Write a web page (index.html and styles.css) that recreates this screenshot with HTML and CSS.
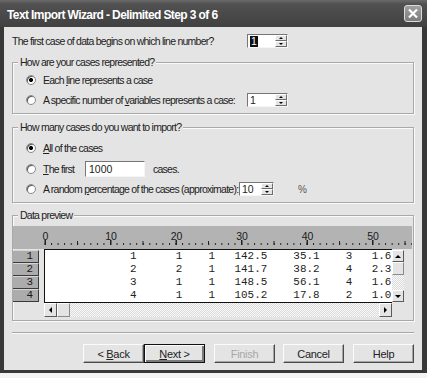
FILE: index.html
```html
<!DOCTYPE html>
<html>
<head>
<meta charset="utf-8">
<link rel="stylesheet" href="styles.css">
</head>
<body>
<div class="window">
  <div class="titlebar">
    <span class="title">Text Import Wizard - Delimited Step 3 of 6</span>
    <span class="close"><svg width="12" height="11" viewBox="0 0 12 11"><path d="M2 1.5 L10 9.5 M10 1.5 L2 9.5" stroke="#fff" stroke-width="2.2" fill="none"/></svg></span>
  </div>
  <div class="client">
    <div class="lineq">
      <span class="lbl">The first case of data begins on which line number?</span>
      <span class="spin w41"><span class="val"><span class="hl">1</span></span><span class="arrows"><span><i class="up"></i></span><span><i class="dn"></i></span></span></span>
    </div>

    <fieldset class="group g1">
      <legend>How are your cases represented?</legend>
      <div class="opt"><span class="radio on"></span><span>Each <u>l</u>ine represents a case</span></div>
      <div class="opt gap6"><span class="radio"></span><span class="lw204">A specific number of <u>v</u>ariables represents a case:</span><span class="spin w41"><span class="val">1</span><span class="arrows"><span><i class="up"></i></span><span><i class="dn"></i></span></span></span></div>
    </fieldset>

    <fieldset class="group g2">
      <legend>How many cases do you want to import?</legend>
      <div class="opt"><span class="radio on"></span><span><u>A</u>ll of the cases</span></div>
      <div class="opt tall gap6"><span class="radio"></span><span class="lw42"><u>T</u>he first</span><span class="field">1000</span><span class="after">cases.</span></div>
      <div class="opt gap5"><span class="radio"></span><span class="lw196">A random <u>p</u>ercentage of the cases (approximate):</span><span class="spin w35"><span class="val">10</span><span class="arrows"><span><i class="up"></i></span><span><i class="dn"></i></span></span></span><span class="pct">%</span></div>
    </fieldset>

    <fieldset class="group g3">
      <legend>Data preview</legend>
      <div class="preview">
        <div class="ruler">
          <svg width="399" height="23" viewBox="0 0 399 23">
            <defs>
              <pattern id="tk" x="31.5" y="0" width="6.55" height="23" patternUnits="userSpaceOnUse">
                <rect x="0" y="17" width="1" height="2" fill="#222"/>
              </pattern>
            </defs>
            <rect x="31.5" y="0" width="367.5" height="23" fill="url(#tk)"/>
            <g fill="#222">
              <rect x="64" y="15" width="1" height="4"/>
              <rect x="129.5" y="15" width="1" height="4"/>
              <rect x="195" y="15" width="1" height="4"/>
              <rect x="260.5" y="15" width="1" height="4"/>
              <rect x="326" y="15" width="1" height="4"/>
              <rect x="391.5" y="15" width="1" height="4"/>
              <rect x="31.5" y="14" width="1.5" height="5"/>
              <rect x="97" y="14" width="1.5" height="5"/>
              <rect x="162.5" y="14" width="1.5" height="5"/>
              <rect x="228" y="14" width="1.5" height="5"/>
              <rect x="293.5" y="14" width="1.5" height="5"/>
              <rect x="359" y="14" width="1.5" height="5"/>
            </g>
            <g class="rnum" text-anchor="middle">
              <text x="32.5" y="13.5">0</text>
              <text x="98" y="13.5">10</text>
              <text x="163.5" y="13.5">20</text>
              <text x="229" y="13.5">30</text>
              <text x="294.5" y="13.5">40</text>
              <text x="360" y="13.5">50</text>
            </g>
          </svg>
        </div>
        <div class="rowheads">
          <span>1</span><span>2</span><span>3</span><span>4</span>
        </div>
        <pre class="data">             1      1    1   142.5    35.1    3   1.6
             2      2    1   141.7    38.2    4   2.3
             3      1    1   148.5    56.1    4   1.6
             4      1    1   105.2    17.8    2   1.0</pre>
        <div class="vscroll">
          <span class="sbtn"><i class="up"></i></span>
          <span class="thumb"></span>
          <span class="track"></span>
          <span class="sbtn"><i class="dn"></i></span>
        </div>
        <div class="hscroll">
          <span class="sbtn"><i class="lt"></i></span>
          <span class="thumb"></span>
          <span class="track"></span>
          <span class="sbtn"><i class="rt"></i></span>
        </div>
      </div>
    </fieldset>

    <div class="sep"></div>

    <div class="buttons">
      <span class="btn back">&lt; <u>B</u>ack</span>
      <span class="btn next"><u>N</u>ext &gt;</span>
      <span class="btn finish">Finish</span>
      <span class="btn cancel">Cancel</span>
      <span class="btn help">Help</span>
    </div>
  </div>
</div>
</body>
</html>
```

FILE: styles.css
```css
* { box-sizing: border-box; }
html, body { margin: 0; padding: 0; }
body {
  width: 427px;
  height: 378px;
  overflow: hidden;
  background: #f3f3f3;
  font-family: "Liberation Sans", Arial, sans-serif;
  font-size: 10.5px;
  letter-spacing: -0.75px;
  white-space: nowrap;
  color: #222;
}
u { text-decoration: underline; text-underline-offset: 1px; }

.window {
  width: 427px;
  height: 373px;
  display: flex;
  flex-direction: column;
  background: #383838;
}
.titlebar {
  height: 27px;
  flex: none;
  display: flex;
  align-items: center;
  justify-content: space-between;
  padding: 2px 5px 0 7px;
  background: linear-gradient(#6a6a6a, #515151 4px, #4a4a4a 50%, #404040);
}
.title {
  color: #fff;
  font-family: "Liberation Sans", Arial, sans-serif;
  font-weight: bold;
  font-size: 12px;
  letter-spacing: -0.6px;
}
.close {
  width: 18px;
  height: 17px;
  margin-top: -2px;
  border: 1px solid #dcdcdc;
  border-radius: 3px;
  background: linear-gradient(#a0a0a0, #7c7c7c);
  display: flex;
  align-items: center;
  justify-content: center;
}
.client {
  flex: 1;
  margin: 0 5px 3px 4px;
  background: #e4e4e4;
  padding: 7px 8px 0 8px;
  display: flex;
  flex-direction: column;
}

.lineq { display: flex; align-items: center; height: 14px; }
.lineq .lbl { width: 235px; }

/* spinner */
.spin {
  display: flex;
  flex: none;
  height: 14px;
  background: #fff;
  border: 1px solid;
  border-color: #767676 #f6f6f6 #f6f6f6 #767676;
  letter-spacing: 0;
}
.w41 { width: 41px; }
.w35 { width: 35px; }
.spin .val { flex: 1; padding-left: 2px; line-height: 12px; }
.hl { background: #111; color: #fff; padding: 0 1px; display: inline-block; line-height: 11px; }
.spin .arrows { width: 12px; display: flex; flex-direction: column; }
.spin .arrows > span {
  flex: 1;
  background: #e4e4e4;
  border: 1px solid;
  border-color: #fff #6c6c6c #6c6c6c #fff;
  display: flex;
  align-items: center;
  justify-content: center;
}
i.up, i.dn, i.lt, i.rt { display: block; width: 0; height: 0; }
i.up { border-left: 2px solid transparent; border-right: 2px solid transparent; border-bottom: 2px solid #000; }
i.dn { border-left: 2px solid transparent; border-right: 2px solid transparent; border-top: 2px solid #000; }
.sbtn i.up { border-left-width: 3px; border-right-width: 3px; border-bottom-width: 3px; }
.sbtn i.dn { border-left-width: 3px; border-right-width: 3px; border-top-width: 3px; }
i.lt { border-top: 3px solid transparent; border-bottom: 3px solid transparent; border-right: 3px solid #000; }
i.rt { border-top: 3px solid transparent; border-bottom: 3px solid transparent; border-left: 3px solid #000; }

/* group boxes */
.group {
  margin: 0;
  padding: 0 0 6px 0;
  border: 1px solid #a9a9a9;
  box-shadow: inset 1px 1px 0 #fafafa, 1px 1px 0 #fafafa;
  min-width: 0;
}
.group legend {
  margin-left: 5px;
  padding: 0 2px;
  line-height: 13px;
  background: #e4e4e4;
}
.g1 { margin-top: 8px; padding-top: 4px; }
.g2 { margin-top: 7px; padding-top: 7px; }
.g3 { margin-top: 6px; padding: 4px 1px 3px 0; }

.opt { display: flex; align-items: center; height: 14px; padding-left: 13px; }
.opt.tall { height: 16px; }
.gap6 { margin-top: 6px; }
.gap5 { margin-top: 5px; }
.radio {
  width: 10px;
  height: 10px;
  flex: none;
  margin-right: 7px;
  border-radius: 50%;
  border: 1px solid #8a8a8a;
  background: #fff;
  box-shadow: inset 1px 1px 0 #5a5a5a;
}
.radio.on { background: radial-gradient(circle, #000 0 1.6px, #fff 2.4px); }
.lw204 { width: 204px; flex: none; }
.lw42 { width: 42px; flex: none; }
.lw196 { width: 196px; flex: none; }
.field {
  width: 60px;
  height: 16px;
  flex: none;
  background: #fff;
  border: 1px solid;
  border-color: #767676 #f6f6f6 #f6f6f6 #767676;
  padding-left: 3px;
  line-height: 14px;
  letter-spacing: 0;
}
.after { margin-left: 8px; }
.pct { margin-left: 24px; color: #555; font-size: 10px; }

/* preview */
.preview {
  display: grid;
  grid-template-columns: 26px 5px 348px 12px 8px;
  grid-template-rows: 23px 54px 14px;
  font-family: "Liberation Mono", "Courier New", monospace;
  letter-spacing: 0;
}
.ruler { grid-column: 1 / 6; grid-row: 1; background: #b3b3b3; }
.ruler svg { display: block; }
.rnum { font-family: "Liberation Sans", Arial, sans-serif; font-size: 10.5px; fill: #1a1a1a; }
.rowheads {
  grid-column: 1;
  grid-row: 2;
  display: flex;
  flex-direction: column;
  padding-top: 1px;
}
.rowheads span {
  height: 13px;
  background: #acacac;
  border-top: 1px solid #d6d6d6;
  border-bottom: 1px solid #3a3a3a;
  border-right: 1px solid #3a3a3a;
  text-align: right;
  padding-right: 5px;
  font-size: 10.9px;
  line-height: 11px;
  color: #1a1a1a;
}
.data {
  grid-column: 3;
  grid-row: 2;
  margin: 0;
  background: #fff;
  border: 1px solid #111;
  border-right: 0;
  font-family: "Liberation Mono", "Courier New", monospace;
  font-size: 10.9px;
  line-height: 13px;
  color: #222;
  white-space: pre;
  overflow: hidden;
}
.vscroll {
  grid-column: 4;
  grid-row: 2;
  display: flex;
  flex-direction: column;
  padding: 1px 0;
}
.sbtn {
  flex: none;
  background: #e4e4e4;
  border: 1px solid;
  border-color: #fff #5a5a5a #5a5a5a #fff;
  display: flex;
  align-items: center;
  justify-content: center;
}
.vscroll .sbtn { height: 12px; }
.vscroll .thumb { height: 13px; flex: none; background: #e4e4e4; border: 1px solid; border-color: #fff #8a8a8a #8a8a8a #fff; }
.track {
  flex: 1;
  background: repeating-conic-gradient(#fafafa 0 25%, #dadada 0 50%) 0 0 / 2px 2px;
}
.hscroll {
  grid-column: 3;
  grid-row: 3;
  display: flex;
}
.hscroll .sbtn { width: 13px; }
.hscroll .thumb { width: 13px; flex: none; background: #e4e4e4; border: 1px solid; border-color: #fff #8a8a8a #8a8a8a #fff; }

.sep {
  margin-top: 11px;
  height: 2px;
  border-top: 1px solid #a6a6a6;
  border-bottom: 1px solid #fafafa;
}
.buttons {
  margin-top: 10px;
  display: flex;
  justify-content: flex-end;
}
.btn {
  width: 61px;
  height: 19px;
  display: flex;
  align-items: center;
  justify-content: center;
  background: #e4e4e4;
  border: 1px solid;
  border-color: #fbfbfb #4a4a4a #4a4a4a #fbfbfb;
  box-shadow: inset -1px -1px 0 #a4a4a4;
  font-size: 11px;
  letter-spacing: -0.3px;
  white-space: pre;
}
.next { border: 1px solid #111; box-shadow: inset 1px 1px 0 #fbfbfb, inset -2px -2px 0 #7a7a7a; }
.finish { margin-left: 9px; color: #a8a8a8; }
.cancel { margin-left: 8px; }
.help { margin-left: 9px; }
```
